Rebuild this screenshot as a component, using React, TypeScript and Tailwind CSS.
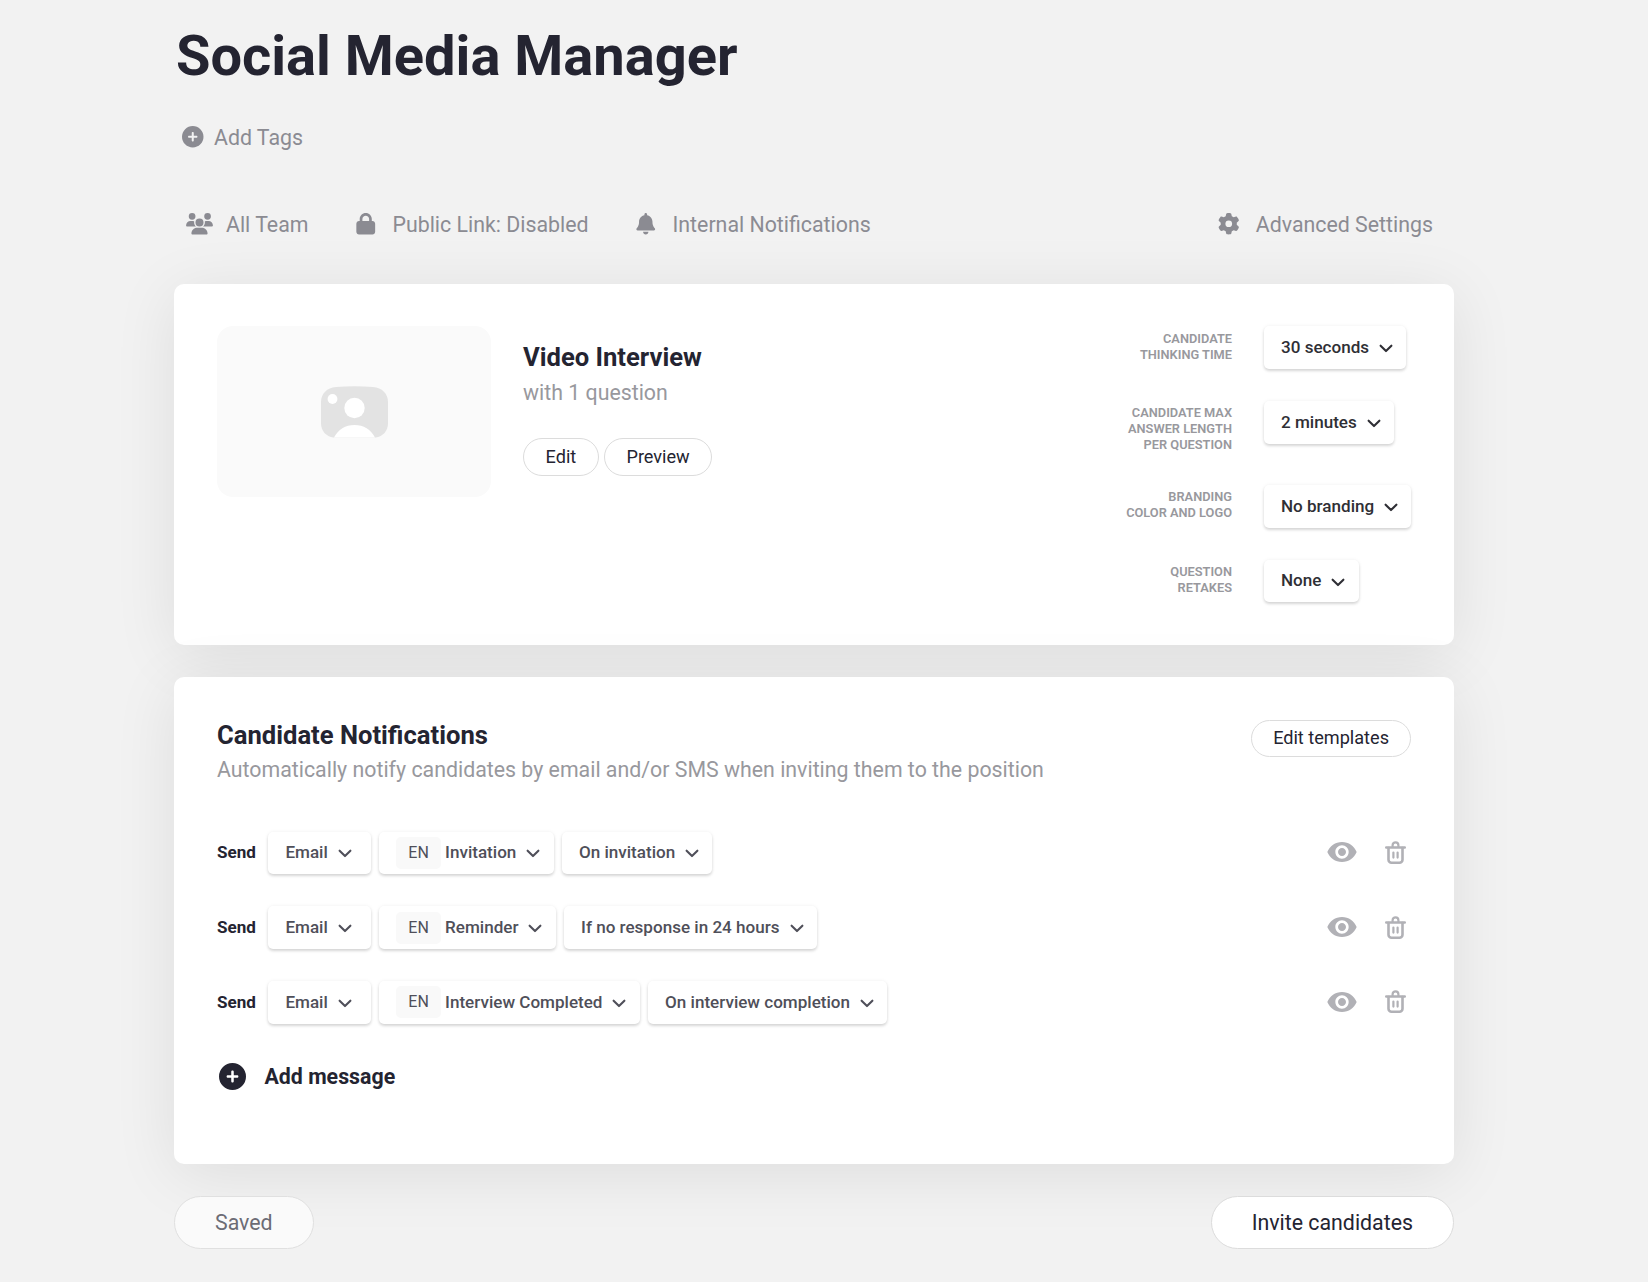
import React from "react";
import { FaBell, FaCirclePlus, FaGear, FaLock, FaUsers } from "react-icons/fa6";
import { MdVisibility } from "react-icons/md";

const settings = [
  { label: ["CANDIDATE", "THINKING TIME"], value: "30 seconds" },
  {
    label: ["CANDIDATE MAX", "ANSWER LENGTH", "PER QUESTION"],
    value: "2 minutes",
  },
  { label: ["BRANDING", "COLOR AND LOGO"], value: "No branding" },
  { label: ["QUESTION", "RETAKES"], value: "None" },
];

const messages = [
  { template: "Invitation", trigger: "On invitation" },
  { template: "Reminder", trigger: "If no response in 24 hours" },
  { template: "Interview Completed", trigger: "On interview completion" },
];

function Chevron() {
  return (
    <svg
      width="14"
      height="9"
      viewBox="0 0 14 9"
      fill="none"
      stroke="currentColor"
      strokeWidth="2.1"
      strokeLinecap="round"
      strokeLinejoin="round"
      className="mt-0.5 ml-2.5 shrink-0"
    >
      <path d="M1.6 1.7 7 7.1l5.4-5.4" />
    </svg>
  );
}

function Trash() {
  return (
    <svg
      width="21"
      height="23"
      viewBox="0 0 21 23"
      fill="none"
      stroke="currentColor"
      strokeLinecap="round"
      strokeLinejoin="round"
    >
      <path strokeWidth="2.4" d="M1.2 6.5h18.6" />
      <path strokeWidth="2.2" d="M7.6 6V4.2a2.9 2.9 0 0 1 5.8 0V6" />
      <path
        strokeWidth="2.6"
        d="M3.5 7v11.7a3 3 0 0 0 3 3h8a3 3 0 0 0 3-3V7"
      />
      <path strokeWidth="2.2" d="M8.4 11.6v5M12.6 11.6v5" />
    </svg>
  );
}

function Placeholder() {
  return (
    <svg width="67" height="52" viewBox="0 0 67 52">
      <path
        fill="#e3e3e3"
        d="M15 .9C27 0 40 0 52 .9 61 1.6 67 7.5 67 16v21c0 8-5 13.5-12.5 14.5h-42C5 50.5 0 45 0 37V16C0 7.5 6 1.6 15 .9Z"
      />
      <circle cx="11.5" cy="13" r="4.9" fill="#fff" />
      <circle cx="33.5" cy="22" r="10.2" fill="#fff" />
      <path
        fill="#fff"
        d="M13 51.5C17 43.5 24.5 39 33.5 39S50 43.5 54 51.5Z"
      />
    </svg>
  );
}

function Select({
  children,
  padding = "pl-[17px] pr-[13.3px]",
}: {
  children: React.ReactNode;
  padding?: string;
}) {
  return (
    <button
      className={`flex h-[42.67px] items-center rounded-[5px] bg-white text-[17.07px] font-medium whitespace-nowrap shadow-[0_2px_3px_rgba(0,0,0,0.15),0_0_4px_rgba(0,0,0,0.05)] ${padding}`}
    >
      {children}
      <Chevron />
    </button>
  );
}

function Tab({ icon, label }: { icon: React.ReactNode; label: string }) {
  return (
    <div className="flex items-center gap-[13px]">
      <span className="flex w-[27px] justify-center">{icon}</span>
      <span className="pt-0.5">{label}</span>
    </div>
  );
}

export default function App() {
  return (
    <div className="h-[1282px] overflow-hidden bg-[#f2f2f2] pl-[174px] font-['Roboto',sans-serif] text-[#242431]">
      <div className="w-[1280px]">
        <h1 className="pt-[23px] pl-0.5 text-[56px] leading-[66px] font-bold whitespace-nowrap">
          Social Media Manager
        </h1>

        <div className="mt-8 flex h-8 items-center gap-[10.5px] pl-2 text-[21.33px] text-[#8b8b92]">
          <FaCirclePlus size={21.5} />
          <span className="pt-0.5">Add Tags</span>
        </div>

        <div className="mt-[55px] flex h-8 items-center gap-11 pr-[21px] pl-3 text-[21.33px] text-[#8b8b92]">
          <Tab
            icon={<FaUsers className="h-[21.5px] w-[27px]" />}
            label="All Team"
          />
          <Tab icon={<FaLock size={21.5} />} label="Public Link: Disabled" />
          <Tab icon={<FaBell size={21.5} />} label="Internal Notifications" />
          <div className="ml-auto">
            <Tab
              icon={<FaGear size={21.5} className="mr-px" />}
              label="Advanced Settings"
            />
          </div>
        </div>

        <section className="mt-11 flex h-[361px] rounded-[10px] bg-white px-[43px] pt-[42px] shadow-[0_10px_64px_rgba(0,0,0,0.085)]">
          <div className="flex h-[171px] w-[274px] items-center justify-center rounded-2xl bg-[#fafafa]">
            <Placeholder />
          </div>
          <div className="ml-8 pt-[15px]">
            <h2 className="text-[25.6px] leading-[32px] font-bold">
              Video Interview
            </h2>
            <p className="mt-[5px] text-[21.33px] leading-[30px] text-[#98989d]">
              with 1 question
            </p>
            <div className="mt-[30px] flex gap-[5px]">
              <button className="h-[38px] rounded-full border border-[#dcdcdc] px-[21.6px] text-[18.13px]">
                Edit
              </button>
              <button className="h-[38px] rounded-full border border-[#dcdcdc] px-[21.6px] text-[18.13px]">
                Preview
              </button>
            </div>
          </div>
          <div className="ml-auto flex w-[320px] flex-col gap-8 pt-[0.33px] text-[#2f2f35]">
            {settings.map((s) => (
              <div key={s.value} className="flex items-start">
                <div className="w-[141px] shrink-0 pt-[4.2px] text-right text-[12.8px] leading-4 font-semibold text-[#98989d]">
                  {s.label.map((line) => (
                    <div key={line}>{line}</div>
                  ))}
                </div>
                <div className="ml-8">
                  <Select>{s.value}</Select>
                </div>
              </div>
            ))}
          </div>
        </section>

        <section className="mt-8 h-[487px] rounded-[10px] bg-white px-[43px] pt-[42px] shadow-[0_10px_64px_rgba(0,0,0,0.085)]">
          <div className="flex items-start justify-between">
            <div>
              <h2 className="text-[25.6px] leading-[32px] font-bold">
                Candidate Notifications
              </h2>
              <p className="mt-1 text-[21.33px] leading-[30px] text-[#98989d]">
                Automatically notify candidates by email and/or SMS when
                inviting them to the position
              </p>
            </div>
            <button className="mt-px h-[37px] rounded-full border border-[#dcdcdc] px-[21px] pb-0.5 text-[18.13px]">
              Edit templates
            </button>
          </div>

          <div className="mt-[46.67px] flex flex-col gap-8">
            {messages.map((m) => (
              <div
                key={m.template}
                className="flex items-center text-[#4f4f59]"
              >
                <span className="mr-3 text-[17.07px] font-bold text-[#242431]">
                  Send
                </span>
                <div className="flex gap-[8.3px]">
                  <Select padding="pl-[17.5px] pr-[19px]">Email</Select>
                  <Select padding="pl-[17px] pr-[13.3px]">
                    <span className="mr-1 flex h-8 w-[45px] items-center justify-center rounded-[5px] bg-[#f9f9f9] text-[16px] font-normal">
                      EN
                    </span>
                    {m.template}
                  </Select>
                  <Select>{m.trigger}</Select>
                </div>
                <div className="ml-auto flex items-center gap-[29px] pr-[5px] pb-px text-[#b1b1b6]">
                  <MdVisibility size={32} className="-mr-0.5" />
                  <Trash />
                </div>
              </div>
            ))}
          </div>

          <div className="mt-[37px] flex h-8 items-center gap-[18.5px] pl-0.5 text-[21.33px] font-bold">
            <FaCirclePlus size={27} />
            <span className="pt-px">Add message</span>
          </div>
        </section>

        <div className="relative mt-8 flex justify-between text-[21.33px]">
          <button className="h-[53px] rounded-full border border-[#e0e0e0] bg-[#fafafa] px-10 text-[#6c6c75]">
            Saved
          </button>
          <button className="h-[53px] rounded-full border border-[#dcdcdc] bg-white px-10">
            Invite candidates
          </button>
        </div>
      </div>
    </div>
  );
}
